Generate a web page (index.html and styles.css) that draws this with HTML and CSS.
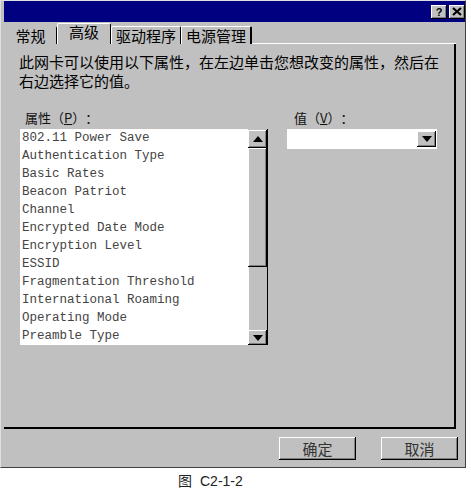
FILE: index.html
```html
<!DOCTYPE html>
<html lang="zh-CN">
<head>
  <meta charset="UTF-8" />
  <title>网卡属性 - 高级</title>
  <link rel="stylesheet" href="styles.css">
</head>
<body>
  <div class="dialog">
    <div class="titlebar">
      <span class="tb-btn tb-help">?</span>
      <span class="tb-btn tb-close">
        <svg width="10" height="9" viewBox="0 0 10 9">
          <path d="M1 1 L9 8 M9 1 L1 8" stroke="#000" stroke-width="2.2" fill="none" />
        </svg>
      </span>
    </div>

    <div class="tabs">
      <div class="tab tab-general">常规</div>
      <div class="tab tab-advanced active">高级</div>
      <div class="tab tab-driver">驱动程序</div>
      <div class="tab tab-power">电源管理</div>
      <div class="tabs-rest"></div>
    </div>

    <div class="panel">
      <p class="desc">此网卡可以使用以下属性，在左边单击您想改变的属性，然后在右边选择它的值。</p>

      <div class="fields">
        <div class="field-prop">
          <div class="label">属性（<u>P</u>）：</div>
          <div class="listbox">
            <ul class="items">
              <li>802.11 Power Save</li>
              <li>Authentication Type</li>
              <li>Basic Rates</li>
              <li>Beacon Patriot</li>
              <li>Channel</li>
              <li>Encrypted Date Mode</li>
              <li>Encryption Level</li>
              <li>ESSID</li>
              <li>Fragmentation Threshold</li>
              <li>International Roaming</li>
              <li>Operating Mode</li>
              <li>Preamble Type</li>
            </ul>
            <div class="scrollbar">
              <div class="sb-btn sb-up"></div>
              <div class="sb-thumb"></div>
              <div class="sb-track"></div>
              <div class="sb-btn sb-down"></div>
            </div>
          </div>
        </div>

        <div class="field-value">
          <div class="label">值（<u>V</u>）：</div>
          <div class="combo">
            <div class="combo-btn"></div>
          </div>
        </div>
      </div>
    </div>

    <div class="actions">
      <button class="btn">确定</button>
      <button class="btn">取消</button>
    </div>
  </div>

  <div class="caption">图<span class="caption-num">C2-1-2</span></div>
</body>
</html>
```

FILE: styles.css
```css
body {
  margin: 0;
  background: #fff;
  font-family: "Noto Sans CJK SC", sans-serif;
  color: #000;
  text-spacing-trim: space-all;
}

/* window frame */
.dialog {
  box-sizing: border-box;
  width: 466px;
  height: 468px;
  padding: 0 0 0 3px;
  background: #c0c0c0;
  border-top: 1px solid #dfdfdf;
  border-left: 1px solid #dfdfdf;
  border-right: 1px solid #404040;
  border-bottom: 1px solid #404040;
}

.titlebar {
  height: 21px;
  background: #000080;
  display: flex;
  justify-content: flex-end;
  align-items: center;
  gap: 2px;
}
.tb-btn {
  box-sizing: border-box;
  width: 16px;
  height: 14px;
  background: #c0c0c0;
  box-shadow: inset -1px -1px #000, inset 1px 1px #fff, inset -2px -2px #808080;
  display: flex;
  align-items: center;
  justify-content: center;
  font: bold 11px "Liberation Sans", sans-serif;
  color: #000;
}

/* tabs */
.tabs {
  display: flex;
  align-items: flex-end;
  width: 452px;
  height: 21px;
  margin-top: 1px;
}
.tab {
  box-sizing: border-box;
  height: 18px;
  border-top: 1px solid #fff;
  border-left: 1px solid #fff;
  border-right: 1px solid #000;
  border-radius: 2px 2px 0 0;
  text-align: center;
  font-size: 15px;
  line-height: 17px;
}
.tab.active {
  height: 21px;
  line-height: 16px;
}
.tab-general { width: 53px; border-top-color: #c0c0c0; border-left-color: #c0c0c0; }
.tab-advanced { width: 54px; }
.tab-driver { width: 70px; }
.tab-power { width: 71px; border-right-width: 2px; }
.tabs-rest {
  flex: 1;
  align-self: stretch;
  border-bottom: 1px solid #fff;
}

/* page body */
.panel {
  box-sizing: border-box;
  width: 452px;
  height: 385px;
  padding: 8px 0 0 15px;
  border-right: 2px solid #000;
  border-bottom: 2px solid #000;
}
.desc {
  margin: 0;
  width: 424px;
  font-size: 15px;
  line-height: 19px;
}

.fields {
  display: flex;
  gap: 19px;
  margin-top: 20px;
}
.label {
  font-size: 13px;
  line-height: 16px;
  color: #111;
}
.field-prop {
  margin-left: 1px;
}
.field-prop .label {
  padding-left: 5px;
}
.field-value .label {
  padding-left: 7px;
}

.listbox {
  display: flex;
  width: 248px;
  height: 216px;
  margin-top: 3px;
  background: #fff;
}
.items {
  flex: 1;
  list-style: none;
  margin: 0;
  padding: 0 0 0 2px;
  font-family: "Liberation Mono", monospace;
  font-size: 12.5px;
  line-height: 18px;
  color: #444;
  white-space: nowrap;
}

.scrollbar {
  width: 20px;
  display: flex;
  flex-direction: column;
  padding-top: 1px;
  background: #c0c0c0;
  border-right: 1px solid #000;
  box-sizing: border-box;
}
.sb-btn, .sb-thumb {
  background: #c0c0c0;
  box-shadow: inset -1px -1px #000, inset 1px 1px #fff, inset -2px -2px #808080;
}
.sb-btn {
  display: flex;
  align-items: center;
  justify-content: center;
}
.sb-up { height: 18px; }
.sb-thumb { height: 119px; }
.sb-track {
  height: 63px;
  border-left: 1px solid #fff;
}
.sb-down { height: 15px; }
.sb-up::after, .sb-down::after, .combo-btn::after {
  content: "";
  border-left: 5px solid transparent;
  border-right: 5px solid transparent;
}
.sb-up::after { border-bottom: 6px solid #000; }
.sb-down::after, .combo-btn::after { border-top: 6px solid #000; }

.combo {
  box-sizing: border-box;
  width: 150px;
  height: 20px;
  margin-top: 3px;
  background: #fff;
  display: flex;
  justify-content: flex-end;
  align-items: center;
  padding-right: 1px;
}
.combo-btn {
  width: 19px;
  height: 16px;
  background: #c0c0c0;
  box-shadow: inset -1px -1px #000, inset 1px 1px #fff, inset -2px -2px #808080;
  display: flex;
  align-items: center;
  justify-content: center;
}

/* OK / Cancel */
.actions {
  display: flex;
  justify-content: flex-end;
  gap: 25px;
  margin-top: 8px;
  padding-right: 7px;
}
.btn {
  width: 77px;
  height: 23px;
  padding: 0;
  border: none;
  background: #c0c0c0;
  box-shadow: inset -1px -1px #000, inset 1px 1px #fff, inset -2px -2px #808080;
  font-family: inherit;
  font-size: 15px;
  line-height: 21px;
  color: #333;
}

.caption {
  margin: 4px 0 0 178px;
  font-size: 14px;
  line-height: 16px;
  color: #222;
}
.caption-num {
  font-family: "Liberation Sans", sans-serif;
  font-size: 14px;
  margin-left: 8px;
}
```
